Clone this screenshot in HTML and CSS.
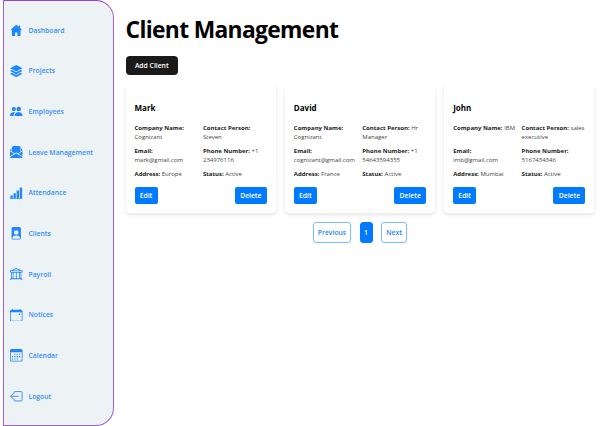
FILE: index.html
```html
<!DOCTYPE html>
<html lang="en">
<head>
<meta charset="utf-8">
<title>Client Management</title>
<link rel="stylesheet" href="styles.css">
</head>
<body>
<div class="app">
  <nav class="sidebar">
    <a class="nav-item"><svg class="icon" viewBox="0 0 16 16"><path d="M8 1 .8 7.200l.9 1L2.500 7.500V15.500h4v-4.500h3v4.500h4V7.500l.8.700.9-1L13 5.200V2h-2v1.600z"/></svg><span>Dashboard</span></a>
    <a class="nav-item"><svg class="icon" viewBox="0 0 16 16"><path d="m8 0 8 4.300-8 4L0 4.300zM2.400 6.400 8 9.200l5.600-2.800L16 7.700l-8 4-8-4zM2.400 10 8 12.800l5.600-2.800L16 11.300l-8 4.200-8-4.200z"/></svg><span>Projects</span></a>
    <a class="nav-item"><svg class="icon" viewBox="0 0 16 16"><circle cx="5" cy="5" r="2.600"/><circle cx="11.200" cy="5" r="2.900"/><path d="M6.700 14s-.7 0-.7-1 1.500-4 5-4 5 3 5 4-.7 1-.7 1zM5 14H.8S0 14 0 13s1.500-4 5-4q.9 0 1.600.3C5 10.500 4.700 12 4.700 13q0 .6.300 1"/></svg><span>Employees</span></a>
    <a class="nav-item"><svg class="icon" viewBox="0 0 16 16"><path d="M2.500 1.500 4 0h8l1.500 1.500v5.800l-3.500 2L8 8.300l-2 1-3.500-2zM1.800 3.300v3.400L0 5.600Q.1 4 1.800 3.300M14.200 3.300v3.400L16 5.600Q15.900 4 14.200 3.300M0 6.800l5.200 3.100L0 13zM16 6.800l-5.200 3.100L16 13zM8 9.500l7.900 4.700Q15.500 16 14 16H2Q.5 16 .1 14.200z"/></svg><span>Leave Management</span></a>
    <a class="nav-item"><svg class="icon" viewBox="0 0 16 16"><path d="M.5 11h3v4h-3zM4.500 8h3v7h-3zM8.500 4.500h3V15h-3zM12.500.5h3V15h-3zM0 14h16v1H0z"/></svg><span>Attendance</span></a>
    <a class="nav-item"><svg class="icon" viewBox="0 0 16 16"><path fill-rule="evenodd" d="M4 0h8a2 2 0 0 1 2 2v12a2 2 0 0 1-2 2H4a2 2 0 0 1-2-2V2a2 2 0 0 1 2-2m4 4a3 3 0 1 0 0 6 3 3 0 0 0 0-6m-5 9.700V14q0 1 1 1h8q1 0 1-1v-.3C12.300 12 10.500 11 8 11s-4.300 1-5 2.700"/></svg><span>Clients</span></a>
    <a class="nav-item"><svg class="icon" viewBox="0 0 16 16"><path fill-rule="evenodd" d="m8 0 6.900 3.100H16v2.800h-1.500v7.200h1V15h.5v1H0v-1h.5v-1.900h1V5.900H0V3.100h1.100zM3.700 3.100h8.600L8 1.200zM1 4v1h14V4zm1.500 2v7h1V6zm2 0v7h3V6zm4 0v7h3V6zm4 0v7h1V6zm-11 8v1h13v-1z"/></svg><span>Payroll</span></a>
    <a class="nav-item"><svg class="icon" viewBox="0 0 16 16"><path fill-rule="evenodd" d="M3.500 0v1h9V0h1v1H14a2 2 0 0 1 2 2v11a2 2 0 0 1-2 2H2a2 2 0 0 1-2-2V3a2 2 0 0 1 2-2h.5V0zM1 4v10q0 1 1 1h12q1 0 1-1V4z"/><path d="M11.200 6h1.600v1.600h-1.600z"/></svg><span>Notices</span></a>
    <a class="nav-item"><svg class="icon" viewBox="0 0 16 16"><path fill-rule="evenodd" d="M2 0h12a2 2 0 0 1 2 2v12a2 2 0 0 1-2 2H2a2 2 0 0 1-2-2V2a2 2 0 0 1 2-2M1 4v10q0 1 1 1h12q1 0 1-1V4z"/><path d="M5.500 6H7v1.500H5.500zM8.500 6H10v1.500H8.500zM11.500 6H13v1.500h-1.500zM2.500 9H4v1.500H2.500zM5.500 9H7v1.500H5.500zM8.500 9H10v1.500H8.500zM11.500 9H13v1.500h-1.500zM2.500 12H4v1.500H2.500zM5.500 12H7v1.500H5.500zM8.500 12H10v1.500H8.500z"/></svg><span>Calendar</span></a>
    <a class="nav-item"><svg class="icon line" viewBox="0 0 16 16"><path d="M5 5V3.500Q5 2 6.500 2H14q1.500 0 1.500 1.500v9Q15.500 14 14 14H6.500Q5 14 5 12.500V11M11 8H.8M4 4.800.8 8 4 11.200"/></svg><span>Logout</span></a>
  </nav>
  <main class="content">
    <h1>Client Management</h1>
    <button class="add">Add Client</button>
    <section class="cards">
      <article class="card">
        <h2>Mark</h2>
        <div class="details">
          <p><b>Company Name:</b><br>Cognizant</p><p><b>Contact Person:</b><br>Steven</p>
          <p><b>Email:</b><br>mark@gmail.com</p><p><b>Phone Number:</b> +1<br>234976116</p>
          <p><b>Address:</b> Europe</p><p><b>Status:</b> Active</p>
        </div>
        <div class="actions"><button>Edit</button><button class="delete">Delete</button></div>
      </article>
      <article class="card">
        <h2>David</h2>
        <div class="details">
          <p><b>Company Name:</b><br>Cognizant</p><p><b>Contact Person:</b> Hr<br>Manager</p>
          <p><b>Email:</b><br>cognizant@gmail.com</p><p><b>Phone Number:</b> +1<br>54643594355</p>
          <p><b>Address:</b> France</p><p><b>Status:</b> Active</p>
        </div>
        <div class="actions"><button>Edit</button><button class="delete">Delete</button></div>
      </article>
      <article class="card">
        <h2>John</h2>
        <div class="details">
          <p><b>Company Name:</b> IBM</p><p><b>Contact Person:</b> sales<br>executive</p>
          <p><b>Email:</b><br>imb@gmail.com</p><p><b>Phone Number:</b><br>5167434346</p>
          <p><b>Address:</b> Mumbai</p><p><b>Status:</b> Active</p>
        </div>
        <div class="actions"><button>Edit</button><button class="delete">Delete</button></div>
      </article>
    </section>
    <div class="pagination"><button class="previous">Previous</button><button class="current">1</button><button class="next">Next</button></div>
  </main>
</div>
</body>
</html>
```
FILE: styles.css
```css
* { box-sizing: border-box; }
body {
  margin: 0;
  overflow: hidden;
  background: #fff;
  color: #000;
  font-family: "Open Sans", "Noto Sans", sans-serif;
}
h1, h2, p { margin: 0; }
button {
  padding: 0;
  border: 0;
  font-family: inherit;
  font-weight: 600;
  font-size: 6.8px;
  color: #fff;
  background: #007bff;
  border-radius: 2px;
}
.app { display: flex; height: 426px; padding-left: 3px; }
.sidebar {
  width: 110.5px;
  flex: none;
  padding: 9px 0 0 6px;
  background: #edf2f5;
  border: 1px solid #a260da;
  border-top-color: #9340d5;
  border-radius: 0 18px 18px 0;
}
.nav-item {
  display: flex;
  align-items: center;
  gap: 6px;
  height: 40.65px;
  color: #3690f5;
  font-size: 6.8px;
  font-weight: 600;
  white-space: nowrap;
}
.icon { width: 12.5px; height: 12.5px; fill: #1e87ff; flex: none; }
.line { fill: none; stroke: #1e87ff; stroke-width: 1.1; }
.content { width: 469px; margin-left: 12px; padding-top: 12.5px; }
h1 {
  height: 43.5px;
  line-height: 33px;
  font-size: 22.8px;
  font-weight: 700;
  letter-spacing: -.65px;
  white-space: nowrap;
}
.add {
  display: block;
  width: 52.5px;
  height: 19px;
  background: #1a1a1a;
  border-radius: 4px;
}
.cards {
  display: grid;
  grid-template-columns: repeat(3, 1fr);
  gap: 9px;
  margin-top: 9px;
}
.card {
  height: 129px;
  padding: 18px 9px 0;
  background: #fff;
  border-radius: 4px;
  box-shadow: 0 2px 4px rgba(0, 0, 0, .1);
}
h2 { height: 21.5px; line-height: 12px; font-size: 8px; font-weight: 700; }
.details {
  display: grid;
  grid-template-columns: 1fr 1fr;
  grid-template-rows: 18.8px 18.8px 9.4px;
  gap: 4.6px;
}
.details p {
  font-size: 6px;
  line-height: 9.4px;
  color: #444;
  white-space: nowrap;
}
.details b { font-weight: 700; color: #222; }
.actions { display: flex; justify-content: space-between; margin-top: 7.5px; }
.actions button { width: 23px; height: 17px; }
.actions .delete { width: 32px; }
.pagination {
  display: flex;
  justify-content: center;
  gap: 8.5px;
  margin-top: 8.5px;
}
.pagination button { height: 21px; border: 1px solid #7cbaff; border-radius: 3px; }
.pagination .previous { width: 38px; background: #fff; color: #2388f8; }
.pagination .current { width: 13px; border-color: #007bff; }
.pagination .next { width: 26px; background: #fff; color: #2388f8; }
```
